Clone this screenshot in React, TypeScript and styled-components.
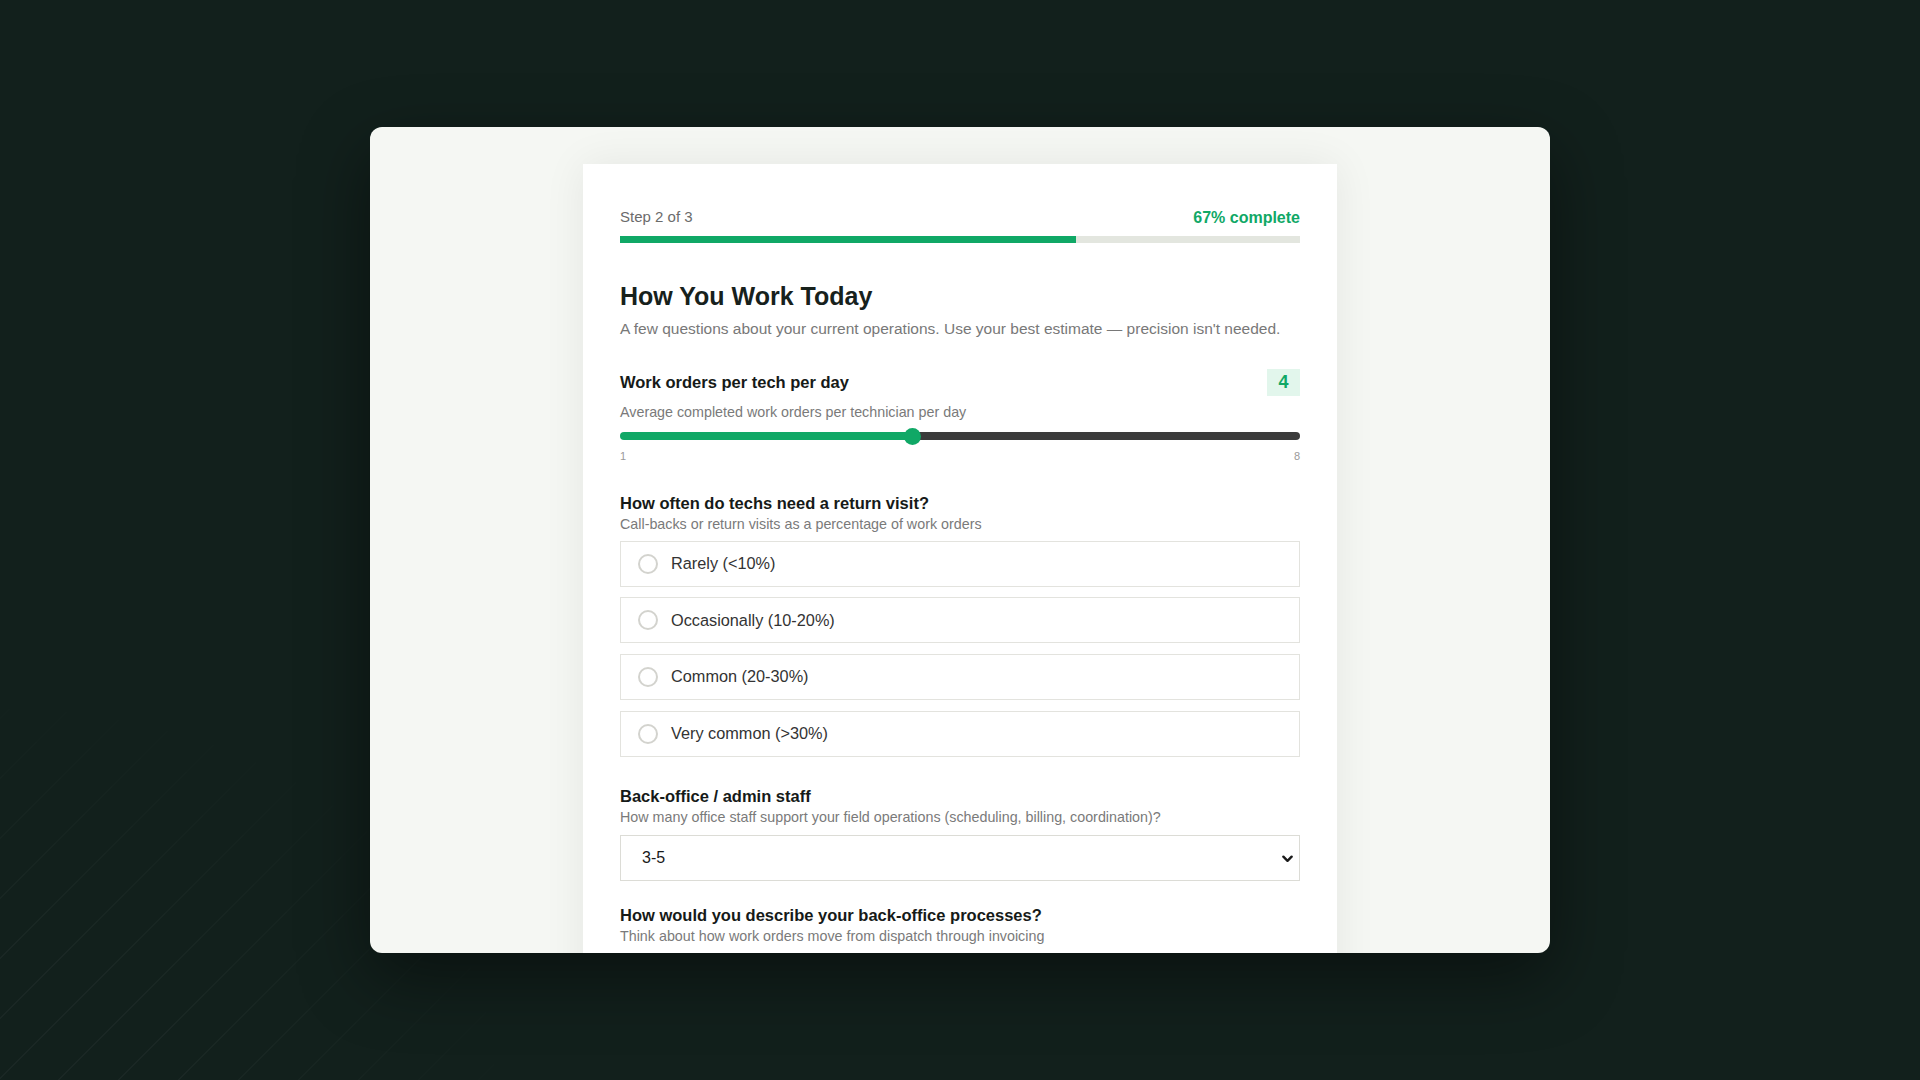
import { useState } from 'react'
import styled, { createGlobalStyle } from 'styled-components'

const GREEN = '#10a866'

const returnOptions = [
  'Rarely (<10%)',
  'Occasionally (10-20%)',
  'Common (20-30%)',
  'Very common (>30%)',
]

const staffOptions = ['0', '1-2', '3-5', '6-10', '10+']

const App = () => {
  const [orders, setOrders] = useState(4)
  const [returns, setReturns] = useState('')
  const [staff, setStaff] = useState('3-5')

  const min = 1
  const max = 8
  const fill = (orders - min) / (max - min)

  return (
    <>
      <GlobalStyle />
      <Page>
        <Frame>
          <FormCard>
            <StepRow>
              <StepText>Step 2 of 3</StepText>
              <Percent>67% complete</Percent>
            </StepRow>
            <Progress>
              <ProgressFill style={{ width: '67%' }} />
            </Progress>

            <Title>How You Work Today</Title>
            <Intro>
              A few questions about your current operations. Use your best estimate — precision isn't needed.
            </Intro>

            <Section $gap={29}>
              <SliderHead>
                <Label>Work orders per tech per day</Label>
                <ValueBadge>{orders}</ValueBadge>
              </SliderHead>
              <Hint $gap={6}>Average completed work orders per technician per day</Hint>
              <Range
                type="range"
                min={min}
                max={max}
                value={orders}
                onChange={(e) => setOrders(Number(e.target.value))}
                style={{ ['--fill' as string]: fill }}
              />
              <RangeScale>
                <span>{min}</span>
                <span>{max}</span>
              </RangeScale>
            </Section>

            <Section $gap={30}>
              <Label>How often do techs need a return visit?</Label>
              <Hint>Call-backs or return visits as a percentage of work orders</Hint>
              <OptionList>
                {returnOptions.map((opt) => (
                  <Option key={opt}>
                    <Radio
                      type="radio"
                      name="returns"
                      checked={returns === opt}
                      onChange={() => setReturns(opt)}
                    />
                    <OptionText>{opt}</OptionText>
                  </Option>
                ))}
              </OptionList>
            </Section>

            <Section $gap={29}>
              <Label>Back-office / admin staff</Label>
              <Hint>How many office staff support your field operations (scheduling, billing, coordination)?</Hint>
              <SelectWrap>
                <Select value={staff} onChange={(e) => setStaff(e.target.value)}>
                  {staffOptions.map((s) => (
                    <option key={s} value={s}>
                      {s}
                    </option>
                  ))}
                </Select>
                <Chevron viewBox="0 0 12 8" aria-hidden="true">
                  <path d="M1.5 1.5 6 6l4.5-4.5" />
                </Chevron>
              </SelectWrap>
            </Section>

            <Section $gap={24}>
              <Label>How would you describe your back-office processes?</Label>
              <Hint>Think about how work orders move from dispatch through invoicing</Hint>
            </Section>
          </FormCard>
        </Frame>
      </Page>
    </>
  )
}

const GlobalStyle = createGlobalStyle`
  html, body {
    margin: 0;
    padding: 0;
    background: #12201c;
  }
  body {
    font-family: "Liberation Sans", Arial, Helvetica, sans-serif;
    -webkit-font-smoothing: antialiased;
  }
  * {
    box-sizing: border-box;
  }
`

const Page = styled.div`
  position: relative;
  height: 100vh;
  display: flex;
  align-items: center;
  justify-content: center;
  overflow: hidden;
  background: #12201c;

  /* faint diagonal rules in the lower-left corner */
  &::before {
    content: '';
    position: absolute;
    inset: 0;
    background: repeating-linear-gradient(
      135deg,
      transparent 0 41px,
      rgba(255, 255, 255, 0.035) 41px 42.4px
    );
    -webkit-mask-image: radial-gradient(ellipse 560px 420px at 0% 100%, #000 30%, transparent 100%);
    mask-image: radial-gradient(ellipse 560px 420px at 0% 100%, #000 30%, transparent 100%);
    pointer-events: none;
  }
`

const Frame = styled.div`
  position: relative;
  width: 1180px;
  height: 826px;
  background: #f5f7f3;
  border-radius: 12px;
  overflow: hidden;
  display: flex;
  justify-content: center;
  align-items: flex-start;
  padding-top: 37px;
  box-shadow: 0 24px 70px rgba(0, 0, 0, 0.45);
`

const FormCard = styled.div`
  flex-shrink: 0;
  width: 754px;
  background: #ffffff;
  padding: 43px 37px 60px;
  box-shadow: 0 0 40px rgba(20, 35, 28, 0.07);
`

const StepRow = styled.div`
  display: flex;
  justify-content: space-between;
  align-items: center;
  height: 20px;
`

const StepText = styled.span`
  font-size: 15px;
  color: #6b6b6b;
  margin-top: -2px;
`

const Percent = styled.span`
  font-size: 16px;
  font-weight: 700;
  color: ${GREEN};
  margin-top: 1px;
`

const Progress = styled.div`
  margin-top: 9px;
  height: 6.5px;
  background: #e3e6df;
`

const ProgressFill = styled.div`
  height: 100%;
  background: ${GREEN};
`

const Title = styled.h1`
  margin: 38px 0 0;
  font-size: 25px;
  line-height: 30px;
  font-weight: 700;
  color: #17211c;
`

const Intro = styled.p`
  margin: 7px 0 0;
  font-size: 15.5px;
  line-height: 22px;
  color: #787878;
`

const Section = styled.section<{ $gap: number }>`
  margin-top: ${(p) => p.$gap}px;
`

const SliderHead = styled.div`
  display: flex;
  justify-content: space-between;
  align-items: center;
`

const Label = styled.div`
  font-size: 16.5px;
  line-height: 20px;
  font-weight: 700;
  color: #161a18;
`

const ValueBadge = styled.div`
  width: 33px;
  height: 27px;
  display: flex;
  align-items: center;
  justify-content: center;
  background: #e2f6ec;
  color: ${GREEN};
  font-size: 18px;
  font-weight: 700;
`

const Hint = styled.div<{ $gap?: number }>`
  margin-top: ${(p) => p.$gap ?? 1}px;
  font-size: 14.3px;
  line-height: 20px;
  color: #7a7a7a;
`

const Range = styled.input`
  -webkit-appearance: none;
  appearance: none;
  display: block;
  width: 100%;
  height: 17px;
  margin: 6px 0 0;
  background: transparent;
  cursor: pointer;

  &::-webkit-slider-runnable-track {
    height: 7.5px;
    border-radius: 4px;
    background: linear-gradient(
      to right,
      ${GREEN} 0,
      ${GREEN} calc(8.5px + var(--fill) * (100% - 17px)),
      #3b3b3b calc(8.5px + var(--fill) * (100% - 17px)),
      #3b3b3b 100%
    );
  }

  &::-webkit-slider-thumb {
    -webkit-appearance: none;
    width: 17px;
    height: 17px;
    margin-top: -4.75px;
    border-radius: 50%;
    background: ${GREEN};
    border: none;
  }
`

const RangeScale = styled.div`
  margin-top: 4px;
  display: flex;
  justify-content: space-between;
  font-size: 11px;
  line-height: 14px;
  color: #9a9a9a;
`

const OptionList = styled.div`
  margin-top: 7px;
  display: flex;
  flex-direction: column;
  gap: 10.7px;
`

const Option = styled.label`
  display: flex;
  align-items: center;
  gap: 13px;
  height: 46px;
  padding: 0 17px;
  border: 1px solid #e3e3de;
  background: #fff;
  cursor: pointer;
`

const Radio = styled.input`
  -webkit-appearance: none;
  appearance: none;
  flex-shrink: 0;
  width: 20px;
  height: 20px;
  margin: 0;
  border-radius: 50%;
  border: 2px solid #d3d3ce;
  background: #fff;
  cursor: pointer;

  &:checked {
    border-color: ${GREEN};
    box-shadow: inset 0 0 0 4px #fff;
    background: ${GREEN};
  }
`

const OptionText = styled.span`
  font-size: 16.3px;
  color: #333333;
`

const SelectWrap = styled.div`
  position: relative;
  margin-top: 8px;
`

const Select = styled.select`
  -webkit-appearance: none;
  appearance: none;
  display: block;
  width: 100%;
  height: 46px;
  padding: 0 30px 0 21px;
  border: 1px solid #dcdcd6;
  border-radius: 0;
  background: #fff;
  font-family: inherit;
  font-size: 16px;
  color: #1a1a1a;
  outline: none;
`

const Chevron = styled.svg`
  position: absolute;
  right: 7px;
  top: 50%;
  width: 11px;
  height: 8px;
  margin-top: -3px;
  fill: none;
  stroke: #1a1a1a;
  stroke-width: 2.6;
  stroke-linecap: round;
  stroke-linejoin: round;
  pointer-events: none;
`

export default App
